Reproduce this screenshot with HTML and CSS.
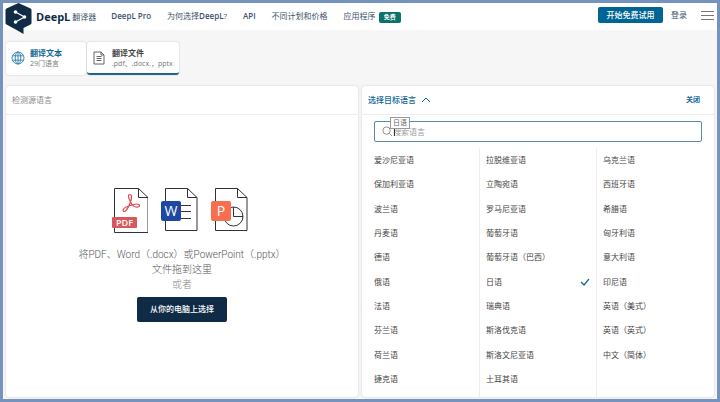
FILE: index.html
```
<!DOCTYPE html>
<html lang="zh-CN">
<head>
  <meta charset="UTF-8">
  <meta name="viewport" content="width=device-width, initial-scale=1">
  <title>DeepL 翻译器</title>
  <link rel="stylesheet" href="styles.css">
</head>
<body>
  <header class="header">
    <a class="brand" href="#">
      <svg class="brand-mark" viewBox="0 0 27 32" aria-hidden="true">
        <path d="M13.5 0 25.5 5.500Q26.5 6 26.5 7V20Q26.5 21 25.5 21.6L18.500 25V31L12.5 27.5 1.500 21.600Q.5 21 .5 20V7Q.5 6 1.500 5.500Z" fill="#0f2b46"/>
        <path d="M10.500 9 19.500 14 10.500 19" fill="none" stroke="#fff" stroke-width="1.200"/>
        <circle cx="10.500" cy="9" r="1.800" fill="#fff"/>
        <circle cx="19.500" cy="14" r="1.800" fill="#fff"/>
        <circle cx="10.500" cy="19" r="1.800" fill="#fff"/>
      </svg>
      <span class="brand-name">DeepL</span>
      <span>翻译器</span>
    </a>
    <nav class="nav">
      <a class="strong" href="#">DeepL Pro</a>
      <a href="#">为何选择<span class="strong">DeepL</span>?</a>
      <a class="strong" href="#">API</a>
      <a href="#">不同计划和价格</a>
      <a href="#">应用程序 <span class="badge">免费</span></a>
    </nav>
    <div class="account">
      <button class="trial" type="button">开始免费试用</button>
      <a href="#">登录</a>
      <button class="menu" type="button" aria-label="菜单">
        <svg viewBox="0 0 13 10"><path d="M0 .5H13M0 4.500H13M0 8.500H13" stroke="#777" fill="none"/></svg>
      </button>
    </div>
  </header>

  <main class="main">
    <div class="tabs">
      <button class="tab tab-text" type="button">
        <svg class="tab-icon" viewBox="0 0 14 14" fill="none" stroke="#2b7fa8" stroke-width=".9">
          <circle cx="7" cy="7" r="6"/>
          <ellipse cx="7" cy="7" rx="2.800" ry="6"/>
          <path d="M7 1V13M1.500 4.800H12.500M1.500 9.200H12.500"/>
        </svg>
        <span><strong>翻译文本</strong><small>29门语言</small></span>
      </button>
      <button class="tab tab-file" type="button">
        <svg class="tab-icon" viewBox="0 0 14 14" fill="none" stroke="#555" stroke-width=".9">
          <path d="M2 1H9L12 4V13H2ZM9 1V4H12M4.500 5.500H9.500M4.500 7.500H9.500M4.500 9.500H9.500"/>
        </svg>
        <span><strong>翻译文件</strong><small>.pdf、.docx.，pptx</small></span>
      </button>
    </div>

    <div class="panels">
      <section class="panel">
        <div class="panel-head source">检测源语言</div>
        <div class="drop">
          <div class="files">
            <svg viewBox="0 0 38 46">
              <path d="M4.500 .5H28.500L38 9.500V44.500H4.500ZM28.500 .5V9.500H38" fill="#fff" stroke="#333"/>
              <path transform="translate(1.500 -1)" d="M18.500 7.500C16.300 7.200 16.800 10.500 18.300 13.500L20.500 17.500C22.500 20.500 26 20.500 27.500 19.500 29 18.200 27.500 16.800 24.500 17L19 18.300C15.500 19.500 12.500 21 11.700 22.800 11 24.800 13.200 25.200 15 23 17 20.500 18.500 16.500 19.300 14 20.300 10.500 20.400 7.800 18.500 7.500Z" fill="none" stroke="#dc4b50" stroke-width="1.200"/>
              <rect x="2" y="29" width="25" height="11" rx="1" fill="#d9575c"/>
              <text class="pdf-label" x="14.500" y="38" text-anchor="middle">PDF</text>
            </svg>
            <svg viewBox="0 0 38 46">
              <path d="M5.500 .5H27.500L37 9.500V42.500H5.500ZM27.500 .5V9.500H37M21 17.500H31M21 23.500H31M21 30.500H31" fill="none" stroke="#333"/>
              <rect x="1" y="13" width="20" height="20" rx="2" fill="#1e46a5"/>
              <text class="app-label" x="11" y="28" text-anchor="middle">W</text>
            </svg>
            <svg viewBox="0 0 38 46">
              <path d="M5.500 .5H27.500L37 9.500V42.500H5.500ZM27.500 .5V9.500H37" fill="none" stroke="#333"/>
              <circle cx="23.500" cy="28.500" r="9.500" fill="none" stroke="#333"/>
              <path d="M23.500 19V28.500H33" fill="none" stroke="#333"/>
              <rect x="1" y="13" width="20" height="20" rx="2" fill="#fa6e50"/>
              <text class="app-label" x="11" y="28" text-anchor="middle">P</text>
            </svg>
          </div>
          <p>将PDF、Word（.docx）或PowerPoint（.pptx）<br>文件拖到这里</p>
          <p class="or">或者</p>
          <button class="choose" type="button">从你的电脑上选择</button>
        </div>
      </section>

      <section class="panel">
        <div class="panel-head target">
          <button class="picker" type="button">选择目标语言
            <svg viewBox="0 0 10 6"><path d="M1 5 5 1 9 5" fill="none" stroke="#0f6795"/></svg>
          </button>
          <button class="close" type="button">关闭</button>
        </div>
        <div class="search">
          <svg class="search-icon" viewBox="0 0 12 12" fill="none" stroke="#888"><circle cx="5" cy="5" r="4"/><path d="M8 8 11 11"/></svg>
          <input type="text" placeholder="搜索语言" aria-label="搜索语言">
          <span class="tooltip" role="tooltip">日语</span>
        </div>
        <div class="languages">
          <ul>
            <li>爱沙尼亚语</li>
            <li>保加利亚语</li>
            <li>波兰语</li>
            <li>丹麦语</li>
            <li>德语</li>
            <li>俄语</li>
            <li>法语</li>
            <li>芬兰语</li>
            <li>荷兰语</li>
            <li>捷克语</li>
          </ul>
          <ul>
            <li>拉脱维亚语</li>
            <li>立陶宛语</li>
            <li>罗马尼亚语</li>
            <li>葡萄牙语</li>
            <li>葡萄牙语（巴西）</li>
            <li class="selected">日语
              <svg viewBox="0 0 10 8"><path d="M1 4 4 7 9 1" fill="none" stroke="#0f6795" stroke-width="1.200"/></svg>
            </li>
            <li>瑞典语</li>
            <li>斯洛伐克语</li>
            <li>斯洛文尼亚语</li>
            <li>土耳其语</li>
          </ul>
          <ul>
            <li>乌克兰语</li>
            <li>西班牙语</li>
            <li>希腊语</li>
            <li>匈牙利语</li>
            <li>意大利语</li>
            <li>印尼语</li>
            <li>英语（美式）</li>
            <li>英语（英式）</li>
            <li>中文（简体）</li>
          </ul>
        </div>
      </section>
    </div>
  </main>
</body>
</html>
```
FILE: styles.css
```
* {
  box-sizing: border-box;
}
body {
  margin: 0;
  min-height: 100vh;
  display: flex;
  flex-direction: column;
  border: 3px solid #7593bd;
  background: #f6f6f6;
  color: #444;
  font: 8px/12px "Open Sans", "Noto Sans CJK SC", sans-serif;
}
a {
  color: inherit;
  text-decoration: none;
}
button {
  margin: 0;
  padding: 0;
  border: 0;
  background: none;
  color: inherit;
  font: inherit;
}
svg {
  display: block;
}

/* header */
.header {
  display: flex;
  align-items: center;
  height: 27px;
  padding: 0 3px 0 2px;
  background: #fff;
  color: #40536a;
}
.brand {
  display: flex;
  align-items: center;
  height: 27px;
  color: #40536a;
}
.brand-mark {
  align-self: flex-start;
  flex: none;
  width: 27px;
  height: 32px;
  margin-right: 4px;
}
.brand-name {
  margin-right: 2px;
  color: #0f2b46;
  font-size: 11px;
  font-weight: 700;
}
.nav {
  display: flex;
  gap: 16px;
  margin-left: 15px;
  white-space: nowrap;
}
.strong {
  font-weight: 600;
}
.badge {
  display: inline-block;
  margin-left: 1px;
  padding: 0 5px;
  border-radius: 2px;
  background: #0a716b;
  color: #fff;
  font-size: 6px;
  font-weight: 700;
  line-height: 11px;
}
.account {
  display: flex;
  align-items: center;
  gap: 8px;
  margin-left: auto;
  padding-bottom: 4px;
}
.trial {
  width: 65px;
  height: 16px;
  border-radius: 2px;
  background: #006494;
  color: #fff;
  font-weight: 500;
}
.menu {
  width: 13px;
  margin-left: 6px;
  padding-top: 2px;
}

/* tabs */
.main {
  flex: 1;
  display: flex;
  flex-direction: column;
  padding: 12px 3px 2px;
}
.tabs {
  display: flex;
  gap: 1px;
  margin-bottom: 11px;
}
.tab {
  display: flex;
  align-items: center;
  gap: 5px;
  height: 33px;
  padding: 0 7px 1px 5px;
  border-radius: 3px;
  background: #fff;
  box-shadow: 0 0 2px rgba(0, 0, 0, 0.2);
  text-align: left;
}
.tab-text {
  width: 80px;
}
.tab-file {
  width: 92px;
  border-bottom: 2px solid #20668c;
  padding-bottom: 0;
}
.tab-icon {
  flex: none;
  width: 14px;
  height: 14px;
}
.tab-file .tab-icon {
  margin-right: 1px;
}
.tab strong,
.tab small {
  display: block;
  font-size: 8px;
  line-height: 11px;
  white-space: nowrap;
}
.tab small {
  color: #777;
  font-size: 7px;
}
.tab-text strong {
  color: #0f6795;
}

/* panels */
.panels {
  flex: 1;
  display: grid;
  grid-template-columns: 1fr 1fr;
  gap: 4px;
}
.panel {
  display: flex;
  flex-direction: column;
  border-radius: 3px;
  background: #fff;
  box-shadow: 0 0 2px rgba(0, 0, 0, 0.2);
}
.panel-head {
  display: flex;
  align-items: center;
  justify-content: space-between;
  height: 29px;
  padding: 0 14px 0 6px;
  border-bottom: 1px solid #eee;
}
.source {
  color: #888;
}
.target {
  color: #0f6795;
}
.picker {
  display: flex;
  align-items: center;
  gap: 5px;
  font-weight: 500;
}
.picker svg {
  width: 10px;
  height: 6px;
}
.close {
  font-size: 7px;
  font-weight: 700;
}

/* drop area */
.drop {
  flex: 1;
  display: flex;
  flex-direction: column;
  align-items: center;
  justify-content: center;
  padding-bottom: 2px;
  color: #555;
  font-family: Roboto, "Noto Sans CJK SC", sans-serif;
  font-size: 10px;
  font-weight: 300;
  line-height: 15px;
  text-align: center;
}
.files {
  display: flex;
  gap: 12px;
  margin: 0 6px 13px 0;
}
.files svg {
  width: 38px;
  height: 46px;
}
.pdf-label {
  fill: #fff;
  font-family: "Open Sans", sans-serif;
  font-size: 9px;
  font-weight: 600;
}
.app-label {
  fill: #fff;
  font-family: "Open Sans", sans-serif;
  font-size: 14px;
  font-weight: 400;
}
.drop p {
  margin: 0;
}
.drop .or {
  color: #888;
}
.choose {
  width: 90px;
  height: 25px;
  margin-top: 5px;
  border-radius: 2px;
  background: #0f2b46;
  color: #fff;
  font-size: 8px;
  font-weight: 500;
}

/* language list */
.search {
  position: relative;
  display: flex;
  align-items: center;
  height: 21px;
  margin: 6px 12px;
  padding-left: 7px;
  border: 1px solid #5a8ba5;
  border-radius: 2px;
}
.search-icon {
  width: 11px;
  height: 11px;
}
.search input {
  flex: 1;
  min-width: 0;
  padding: 0;
  border: 0;
  outline: 0;
  background: none;
  font: inherit;
}
.search input::placeholder {
  color: #999;
}
.tooltip {
  position: absolute;
  top: -5px;
  left: 15px;
  padding: 0 2px;
  border: 1px solid #999;
  background: #fff;
  color: #666;
  font-size: 7px;
  line-height: 10px;
}
/* text cursor below the tooltip */
.tooltip::after {
  content: "";
  position: absolute;
  top: 11px;
  left: 3px;
  width: 1px;
  height: 7px;
  background: #333;
}
.languages {
  flex: 1;
  display: grid;
  grid-template-columns: 117fr 117fr 118fr;
}
.languages ul {
  display: grid;
  grid-template-rows: repeat(10, minmax(20px, 1fr));
  align-items: center;
  margin: 0;
  padding: 0 6px;
  list-style: none;
}
.languages ul:first-child {
  padding-left: 12px;
}
.languages ul + ul {
  border-left: 1px solid #eee;
}
.languages ul {
  padding-bottom: 6px;
}
.selected {
  display: flex;
  align-items: center;
  justify-content: space-between;
}
.selected svg {
  width: 10px;
  height: 8px;
}
```
